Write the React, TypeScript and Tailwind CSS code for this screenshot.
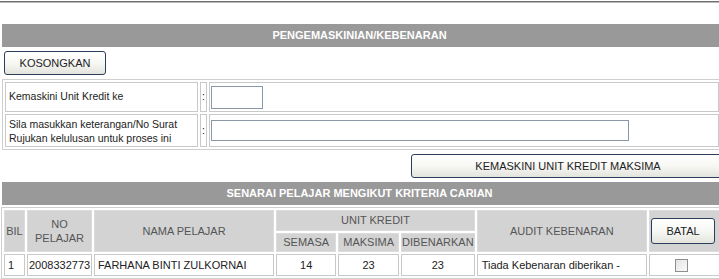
import React from "react";

const font = { fontFamily: '"Liberation Sans", Arial, sans-serif' };

function Btn({ children, className }: { children: React.ReactNode; className: string }) {
  return (
    <div
      className={
        "flex items-center justify-center rounded-[3px] border border-[#2b3f5c] bg-gradient-to-b from-[#ffffff] via-[#f7f7f4] to-[#e4e4de] text-[11px] text-[#222] " +
        className
      }
    >
      {children}
    </div>
  );
}

export default function App() {
  const th = "bg-[#d3d3d3] text-[#555] font-normal text-center border border-[#dcdcdc] p-0";
  const td = "bg-white border border-[#c9c9c9] text-[#222] p-0";
  return (
    <div style={font} className="w-[719px] h-[279px] overflow-hidden bg-white relative">
      <div className="mt-[1px] h-[1px] bg-[#6f6f6f]" />
      <div className="h-[1px] bg-[#b8b8b8]" />
      <div className="mt-[21px] ml-[2px] h-[23px] bg-[#999999] text-white font-bold text-[11px] flex items-center justify-center pr-[2px]">
        PENGEMASKINIAN/KEBENARAN
      </div>
      <Btn className="mt-[4px] ml-[4px] w-[102px] h-[24px]">KOSONGKAN</Btn>
      <table className="mt-[4px] ml-[2px] w-[720px] border border-[#cfcfcf] border-separate border-spacing-[2px] text-[10.5px] text-[#222]">
        <tbody>
          <tr className="h-[30px]">
            <td className={td + " w-[193px] pl-[3px]"}>Kemaskini Unit Kredit ke</td>
            <td className={td + " w-[7px] text-center"}>:</td>
            <td className={td + " pl-[1px]"}>
              <div className="w-[52px] h-[23px] border border-[#8a97a6] bg-white" />
            </td>
          </tr>
          <tr className="h-[33px]">
            <td className={td + " pl-[3px] leading-[14px]"}>
              Sila masukkan keterangan/No Surat
              <br />
              Rujukan kelulusan untuk proses ini
            </td>
            <td className={td + " text-center"}>:</td>
            <td className={td + " pl-[1px]"}>
              <div className="w-[418px] h-[21px] border border-[#8a97a6] bg-white" />
            </td>
          </tr>
        </tbody>
      </table>
      <Btn className="mt-[4px] ml-[411px] w-[314px] h-[24px]">KEMASKINI UNIT KREDIT MAKSIMA</Btn>
      <div className="mt-[4px] ml-[2px] h-[23px] bg-[#999999] text-white font-bold text-[11px] flex items-center justify-center pr-[2px]">
        SENARAI PELAJAR MENGIKUT KRITERIA CARIAN
      </div>
      <table className="mt-[2px] ml-[1px] w-[722px] border border-[#cfcfcf] border-separate border-spacing-[2px] text-[11px]">
        <tbody>
          <tr className="h-[21px]">
            <th rowSpan={2} className={th + " w-[21px]"}>BIL</th>
            <th rowSpan={2} className={th + " w-[65px] leading-[14px]"}>
              NO
              <br />
              PELAJAR
            </th>
            <th rowSpan={2} className={th + " w-[181px]"}>NAMA PELAJAR</th>
            <th colSpan={3} className={th}>UNIT KREDIT</th>
            <th rowSpan={2} className={th + " w-[171px]"}>AUDIT KEBENARAN</th>
            <th rowSpan={2} className={th + " w-[71px]"}>
              <Btn className="ml-[1px] w-[64px] h-[26px]">BATAL</Btn>
            </th>
          </tr>
          <tr className="h-[19px]">
            <th className={th + " w-[60px]"}>SEMASA</th>
            <th className={th + " w-[61px]"}>MAKSIMA</th>
            <th className={th + " w-[72px]"}>DIBENARKAN</th>
          </tr>
          <tr className="h-[22px]">
            <td className={td + " pl-[3px]"}>1</td>
            <td className={td + " pl-[1px]"}>2008332773</td>
            <td className={td + " pl-[3px]"}>FARHANA BINTI ZULKORNAI</td>
            <td className={td + " text-center"}>14</td>
            <td className={td + " text-center"}>23</td>
            <td className={td + " text-center"}>23</td>
            <td className={td + " pl-[4px]"}>Tiada Kebenaran diberikan -</td>
            <td className={td}>
              <div className="ml-[25px] w-[13px] h-[13px] border border-[#8f8f8f] bg-gradient-to-br from-[#e4e4e4] to-[#fafafa]" />
            </td>
          </tr>
        </tbody>
      </table>
    </div>
  );
}
